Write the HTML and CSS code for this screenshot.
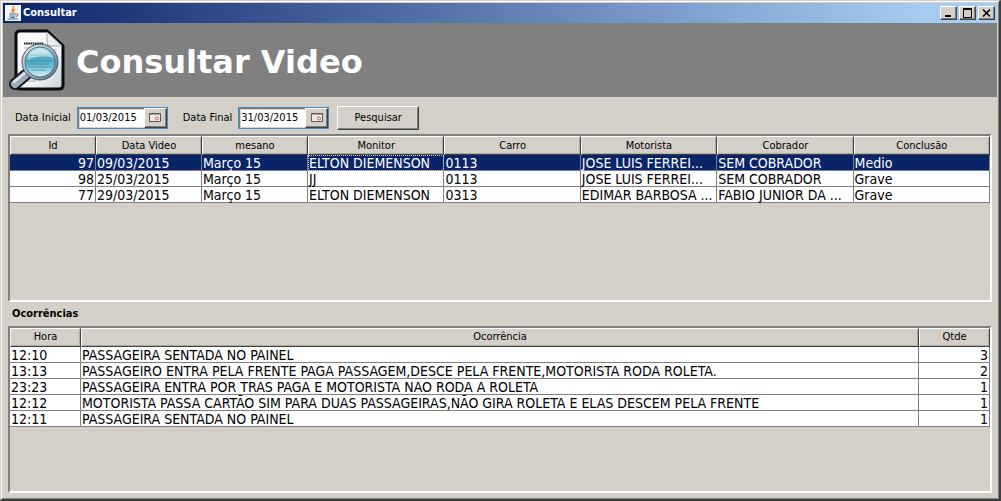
FILE: index.html
```html
<!DOCTYPE html>
<html lang="pt-BR">
<head>
<meta charset="utf-8">
<title>Consultar</title>
<link rel="stylesheet" href="styles.css">
</head>
<body>
<div class="window">
  <header class="titlebar">
    <svg class="java-icon" viewBox="0 0 16 16" aria-hidden="true">
      <rect width="16" height="16" fill="#f4f4f4"/>
      <path d="M8 1C10 3 5.500 4.500 7.500 7.500M10 4C7.500 5.500 9.500 6.500 8 8" fill="none" stroke="#e08a2c" stroke-width="1.400"/>
      <path d="M4 9h7.500M4.500 11h6M5.500 12.500h4.500M2.500 14h10.500M11.500 9c2.500-.5 2 2-.5 2.500" fill="none" stroke="#4c7088" stroke-width="1"/>
    </svg>
    <span class="caption">Consultar</span>
    <div class="controls">
      <button class="ctl" type="button" aria-label="Minimizar"><svg viewBox="0 0 12 10"><path d="M2 8h6" stroke="#000" stroke-width="2"/></svg></button>
      <button class="ctl" type="button" aria-label="Maximizar"><svg viewBox="0 0 12 10"><path d="M1.500 1v8.500h8V1M1 1.500h9" fill="none" stroke="#000"/><path d="M1 1h9" stroke="#000" stroke-width="2"/></svg></button>
      <button class="ctl" type="button" aria-label="Fechar"><svg viewBox="0 0 12 10"><path d="M2 1.500l7 7M9 1.500l-7 7" stroke="#000" stroke-width="1.600"/></svg></button>
    </div>
  </header>
  <div class="banner">
    <svg class="doc-icon" viewBox="0 0 60 66" aria-hidden="true">
      <defs>
        <linearGradient id="paper" x1="0" y1="0" x2="1" y2="1"><stop offset="0" stop-color="#fff"/><stop offset=".65" stop-color="#f1f3f5"/><stop offset="1" stop-color="#c5cbd0"/></linearGradient>
        <linearGradient id="lens" x1="0" y1="0" x2="0" y2="1"><stop offset="0" stop-color="#c9e6ef"/><stop offset=".45" stop-color="#52abc7"/><stop offset=".6" stop-color="#69bdd3"/><stop offset="1" stop-color="#d6f4f6"/></linearGradient>
        <linearGradient id="metal" x1="0" y1="0" x2="1" y2="1"><stop offset="0" stop-color="#e2eaf0"/><stop offset=".5" stop-color="#a2b2c0"/><stop offset="1" stop-color="#576878"/></linearGradient>
      </defs>
      <path d="M12 4h27l16 15v39q0 4-4 4H12q-4 0-4-4V8q0-4 4-4z" fill="url(#paper)" stroke="#080b0e" stroke-width="3"/>
      <path d="M39 5v10q0 4 4 4h11z" fill="#e9edf0" stroke="#a0a8af"/>
      <path d="M16 16.500h20" stroke="#222" stroke-width="2" stroke-dasharray="1.600 .6"/>
      <path d="M16 21h6M42 23h7M16 51h15M16 54h12" stroke="#a7adb2" stroke-width="1"/>
      <path d="M21 45L7 57" stroke="#121a22" stroke-width="12" stroke-linecap="round"/>
      <path d="M21 45L7 57" stroke="#9dabb8" stroke-width="8" stroke-linecap="round"/>
      <path d="M19 44L6 55" stroke="#dce5eb" stroke-width="2.500" stroke-linecap="round"/>
      <circle cx="32" cy="35" r="18" fill="url(#metal)" stroke="#465666" stroke-width="1"/>
      <circle cx="32" cy="35" r="15" fill="url(#lens)" stroke="#43748b" stroke-width="1"/>
      <path d="M22 28h20M20 31h24M19 34h25M19 37h22M20 40h24M23 43h15" stroke="#287f9d" stroke-width="1" opacity=".65"/>
      <path d="M19 33q2-11 13-11 10 0 13 9-9-5-26 2z" fill="#fff" opacity=".45"/>
    </svg>
    <h1>Consultar Video</h1>
  </div>
  <main>
    <form class="filters">
      <label for="start">Data Inicial</label>
      <div class="date"><input id="start" type="text" value="01/03/2015"><button type="button" aria-label="Escolher data inicial"><svg viewBox="0 0 14 11"><path d="M1.500 1.500h11v8h-11z" fill="#eeeae2" stroke="#5c564e"/><path d="M2 2.500h10" stroke="#a9a49c"/><circle cx="9" cy="6.500" r="1.500" fill="#fff" stroke="#d85b50"/></svg></button></div>
      <label class="second" for="end">Data Final</label>
      <div class="date"><input id="end" type="text" value="31/03/2015"><button type="button" aria-label="Escolher data final"><svg viewBox="0 0 14 11"><path d="M1.500 1.500h11v8h-11z" fill="#eeeae2" stroke="#5c564e"/><path d="M2 2.500h10" stroke="#a9a49c"/><circle cx="9" cy="6.500" r="1.500" fill="#fff" stroke="#d85b50"/></svg></button></div>
      <button class="search" type="button">Pesquisar</button>
    </form>
    <div class="pane">
      <table>
        <colgroup><col class="c-id"><col class="c-date"><col class="c-date"><col><col><col><col><col></colgroup>
        <thead><tr><th>Id</th><th>Data Video</th><th>mesano</th><th>Monitor</th><th>Carro</th><th>Motorista</th><th>Cobrador</th><th>Conclusão</th></tr></thead>
        <tbody>
          <tr class="selected"><td class="num">97</td><td>09/03/2015</td><td>Março 15</td><td class="focus">ELTON DIEMENSON</td><td>0113</td><td>JOSE LUIS FERREI...</td><td>SEM COBRADOR</td><td>Medio</td></tr>
          <tr><td class="num">98</td><td>25/03/2015</td><td>Março 15</td><td>JJ</td><td>0113</td><td>JOSE LUIS FERREI...</td><td>SEM COBRADOR</td><td>Grave</td></tr>
          <tr><td class="num">77</td><td>29/03/2015</td><td>Março 15</td><td>ELTON DIEMENSON</td><td>0313</td><td>EDIMAR BARBOSA ...</td><td>FABIO JUNIOR DA ...</td><td>Grave</td></tr>
        </tbody>
      </table>
    </div>
    <h2>Ocorrências</h2>
    <div class="pane">
      <table>
        <colgroup><col class="c-hour"><col><col class="c-hour"></colgroup>
        <thead><tr><th>Hora</th><th>Ocorrência</th><th>Qtde</th></tr></thead>
        <tbody>
          <tr><td>12:10</td><td>PASSAGEIRA SENTADA NO PAINEL</td><td class="num">3</td></tr>
          <tr><td>13:13</td><td>PASSAGEIRO ENTRA PELA FRENTE PAGA PASSAGEM,DESCE PELA FRENTE,MOTORISTA RODA ROLETA.</td><td class="num">2</td></tr>
          <tr><td>23:23</td><td>PASSAGEIRA ENTRA POR TRAS PAGA E MOTORISTA NAO RODA A ROLETA</td><td class="num">1</td></tr>
          <tr><td>12:12</td><td>MOTORISTA PASSA CARTÃO SIM PARA DUAS PASSAGEIRAS,NÃO GIRA ROLETA E ELAS DESCEM PELA FRENTE</td><td class="num">1</td></tr>
          <tr><td>12:11</td><td>PASSAGEIRA SENTADA NO PAINEL</td><td class="num">1</td></tr>
        </tbody>
      </table>
    </div>
  </main>
</div>
</body>
</html>
```
FILE: styles.css
```css
* { box-sizing: border-box; }
body {
  margin: 0;
  background: #404040;
  color: #000;
  font: 11px/14px "DejaVu Sans Condensed", "DejaVu Sans", sans-serif;
}
.window {
  display: flex;
  flex-direction: column;
  min-height: 100vh;
  padding: 2px;
  background: #d4d0c8;
  border: 1px solid #d4d0c8;
  border-right: 2px solid #404040;
  border-bottom: 2px solid #404040;
  box-shadow: inset 1px 1px #fff, inset -1px -1px #808080;
}
button { padding: 0; color: #000; font: inherit; background: #d4d0c8; }
.titlebar {
  display: flex;
  align-items: center;
  gap: 2px;
  height: 20px;
  padding: 0 2px;
  background: linear-gradient(90deg, #0a246a, #a6caf0 92%);
}
.java-icon { width: 16px; height: 16px; }
.caption { color: #fff; font-weight: bold; }
.controls { display: flex; gap: 2px; margin-left: auto; }
.ctl {
  width: 17px;
  height: 14px;
  border: 1px solid;
  border-color: #fff #404040 #404040 #fff;
  box-shadow: inset -1px -1px #808080;
}
.ctl svg { display: block; width: 12px; height: 10px; margin: 0 auto; }
.banner {
  display: flex;
  align-items: center;
  gap: 8px;
  height: 74px;
  padding: 0 5px;
  background: #808080;
}
.doc-icon { width: 60px; height: 66px; }
h1 {
  margin: 0;
  padding-top: 3px;
  color: #fff;
  font: bold 32px/44px "DejaVu Sans", sans-serif;
}
main { display: flex; flex: 1; flex-direction: column; padding: 0 5px 4px; }
.filters {
  display: flex;
  align-items: center;
  height: 37px;
  padding: 4px 7px 0;
}
.filters label { margin-right: 6px; }
.filters .second { margin-left: 15px; }
.date {
  display: flex;
  width: 91px;
  height: 22px;
  border: 1px solid #3e8ccc;
  box-shadow: inset 1px 1px #808080;
}
.date input {
  flex: 1;
  min-width: 0;
  margin: 2px 0 1px 2px;
  padding: 0;
  border: 0;
  background: #fff;
  color: #000;
  font: 11px/16px "DejaVu Sans Condensed", "DejaVu Sans", sans-serif;
}
.date button, .search {
  border: 1px solid;
  border-color: #fff #404040 #404040 #fff;
  box-shadow: inset -1px -1px #808080;
}
.date button { width: 23px; }
.date svg { display: block; width: 14px; height: 11px; margin: 0 auto; }
.search { width: 82px; height: 24px; margin-left: 8px; }
.pane {
  flex: 1 1 0;
  border: 2px solid;
  border-color: #808080 #fff #fff #808080;
}
table {
  width: 100%;
  table-layout: fixed;
  border-collapse: separate;
  border-spacing: 0;
}
.c-id { width: 86px; }
.c-date { width: 106px; }
.c-hour { width: 71px; }
th {
  height: 19px;
  padding: 0;
  background: #d4d0c8;
  border: 1px solid;
  border-color: #fff #404040 #404040 #fff;
  box-shadow: inset -1px -1px #b0aca4;
  font-weight: normal;
}
td {
  height: 16px;
  padding: 1px 1px 0;
  background: #fff;
  border: 0 solid #808080;
  border-width: 0 1px 1px 0;
  font-size: 14px;
  line-height: 14px;
  white-space: nowrap;
}
.num { text-align: right; }
.selected td { background: #0a246a; color: #fff; }
.selected .focus { outline: 1px dotted #d4d0c8; outline-offset: -1px; }
h2 {
  margin: 0;
  padding: 5px 4px;
  font-size: 11px;
  line-height: 14px;
}
```
